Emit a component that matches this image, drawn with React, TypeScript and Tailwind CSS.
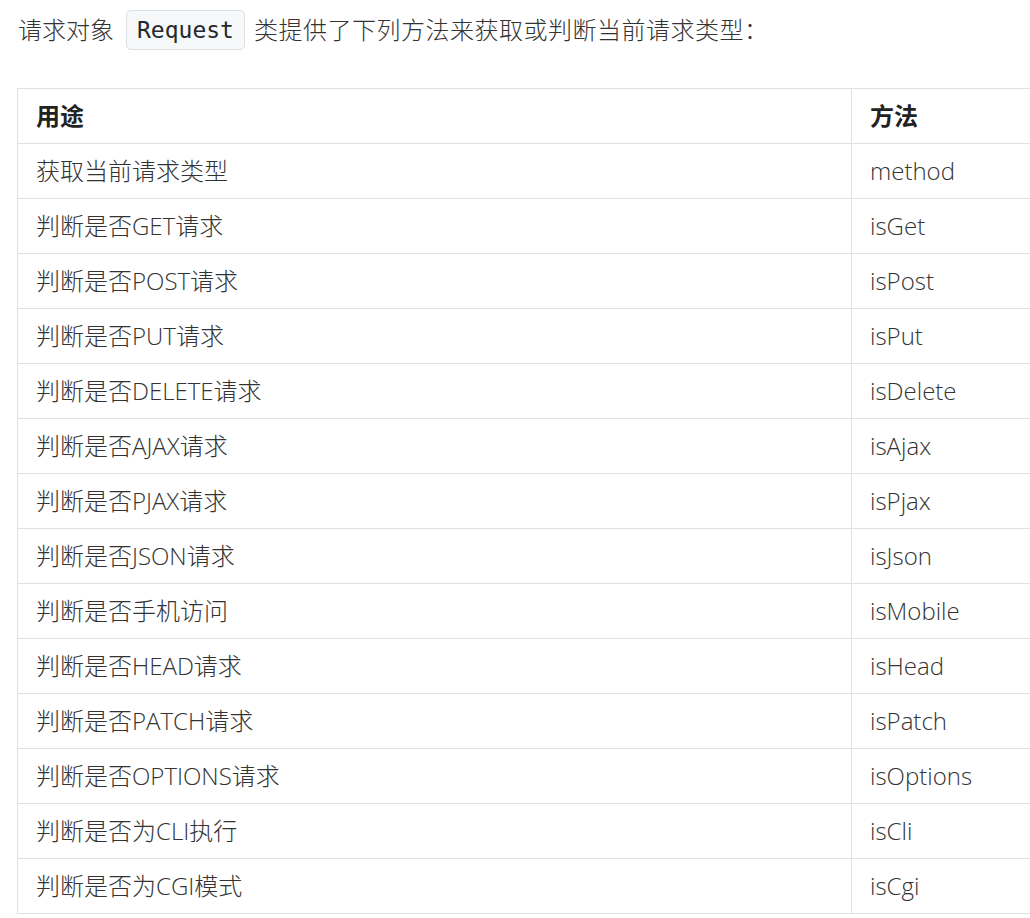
import React from "react";

const rows: Array<[string, string]> = [
    ["获取当前请求类型", "method"],
    ["判断是否GET请求", "isGet"],
    ["判断是否POST请求", "isPost"],
    ["判断是否PUT请求", "isPut"],
    ["判断是否DELETE请求", "isDelete"],
    ["判断是否AJAX请求", "isAjax"],
    ["判断是否PJAX请求", "isPjax"],
    ["判断是否JSON请求", "isJson"],
    ["判断是否手机访问", "isMobile"],
    ["判断是否HEAD请求", "isHead"],
    ["判断是否PATCH请求", "isPatch"],
    ["判断是否OPTIONS请求", "isOptions"],
    ["判断是否为CLI执行", "isCli"],
    ["判断是否为CGI模式", "isCgi"],
];

const font = {
    fontFamily:
        '"Open Sans", "Noto Sans CJK SC", "Noto Sans", sans-serif',
};

export default function App() {
    return (
        <div
            className="w-[1030px] h-[918px] overflow-hidden bg-white pl-[17px] text-[#333] text-[24px] font-light"
            style={font}
        >
            <p className="flex items-center h-[40px] mt-[10px] mb-[38px] pl-px leading-none">
                <span>请求对象</span>
                <code className="ml-[12px] mr-[9px] h-[40px] px-[10px] flex items-center rounded-[5px] border border-[#dcdfe3] bg-[#f6f8fa] text-[23px] font-normal text-[#24292e] font-['DejaVu_Sans_Mono',monospace]">
                    Request
                </code>
                <span className="tracking-[0.5px]">类提供了下列方法来获取或判断当前请求类型：</span>
            </p>
            <table className="w-[1040px] border-collapse table-fixed">
                <colgroup>
                    <col className="w-[834px]" />
                    <col />
                </colgroup>
                <thead>
                    <tr className="h-[55px]">
                        <th className="border border-[#dfe2e5] pl-[18px] text-left font-bold text-[#222]">
                            用途
                        </th>
                        <th className="border border-[#dfe2e5] pl-[18px] text-left font-bold text-[#222]">
                            方法
                        </th>
                    </tr>
                </thead>
                <tbody>
                    {rows.map(([use, method]) => (
                        <tr key={method} className="h-[55px]">
                            <td className="border border-[#dfe2e5] pl-[18px] pb-px">
                                {use}
                            </td>
                            <td className="border border-[#dfe2e5] pl-[18px] pb-px">
                                {method}
                            </td>
                        </tr>
                    ))}
                </tbody>
            </table>
        </div>
    );
}
